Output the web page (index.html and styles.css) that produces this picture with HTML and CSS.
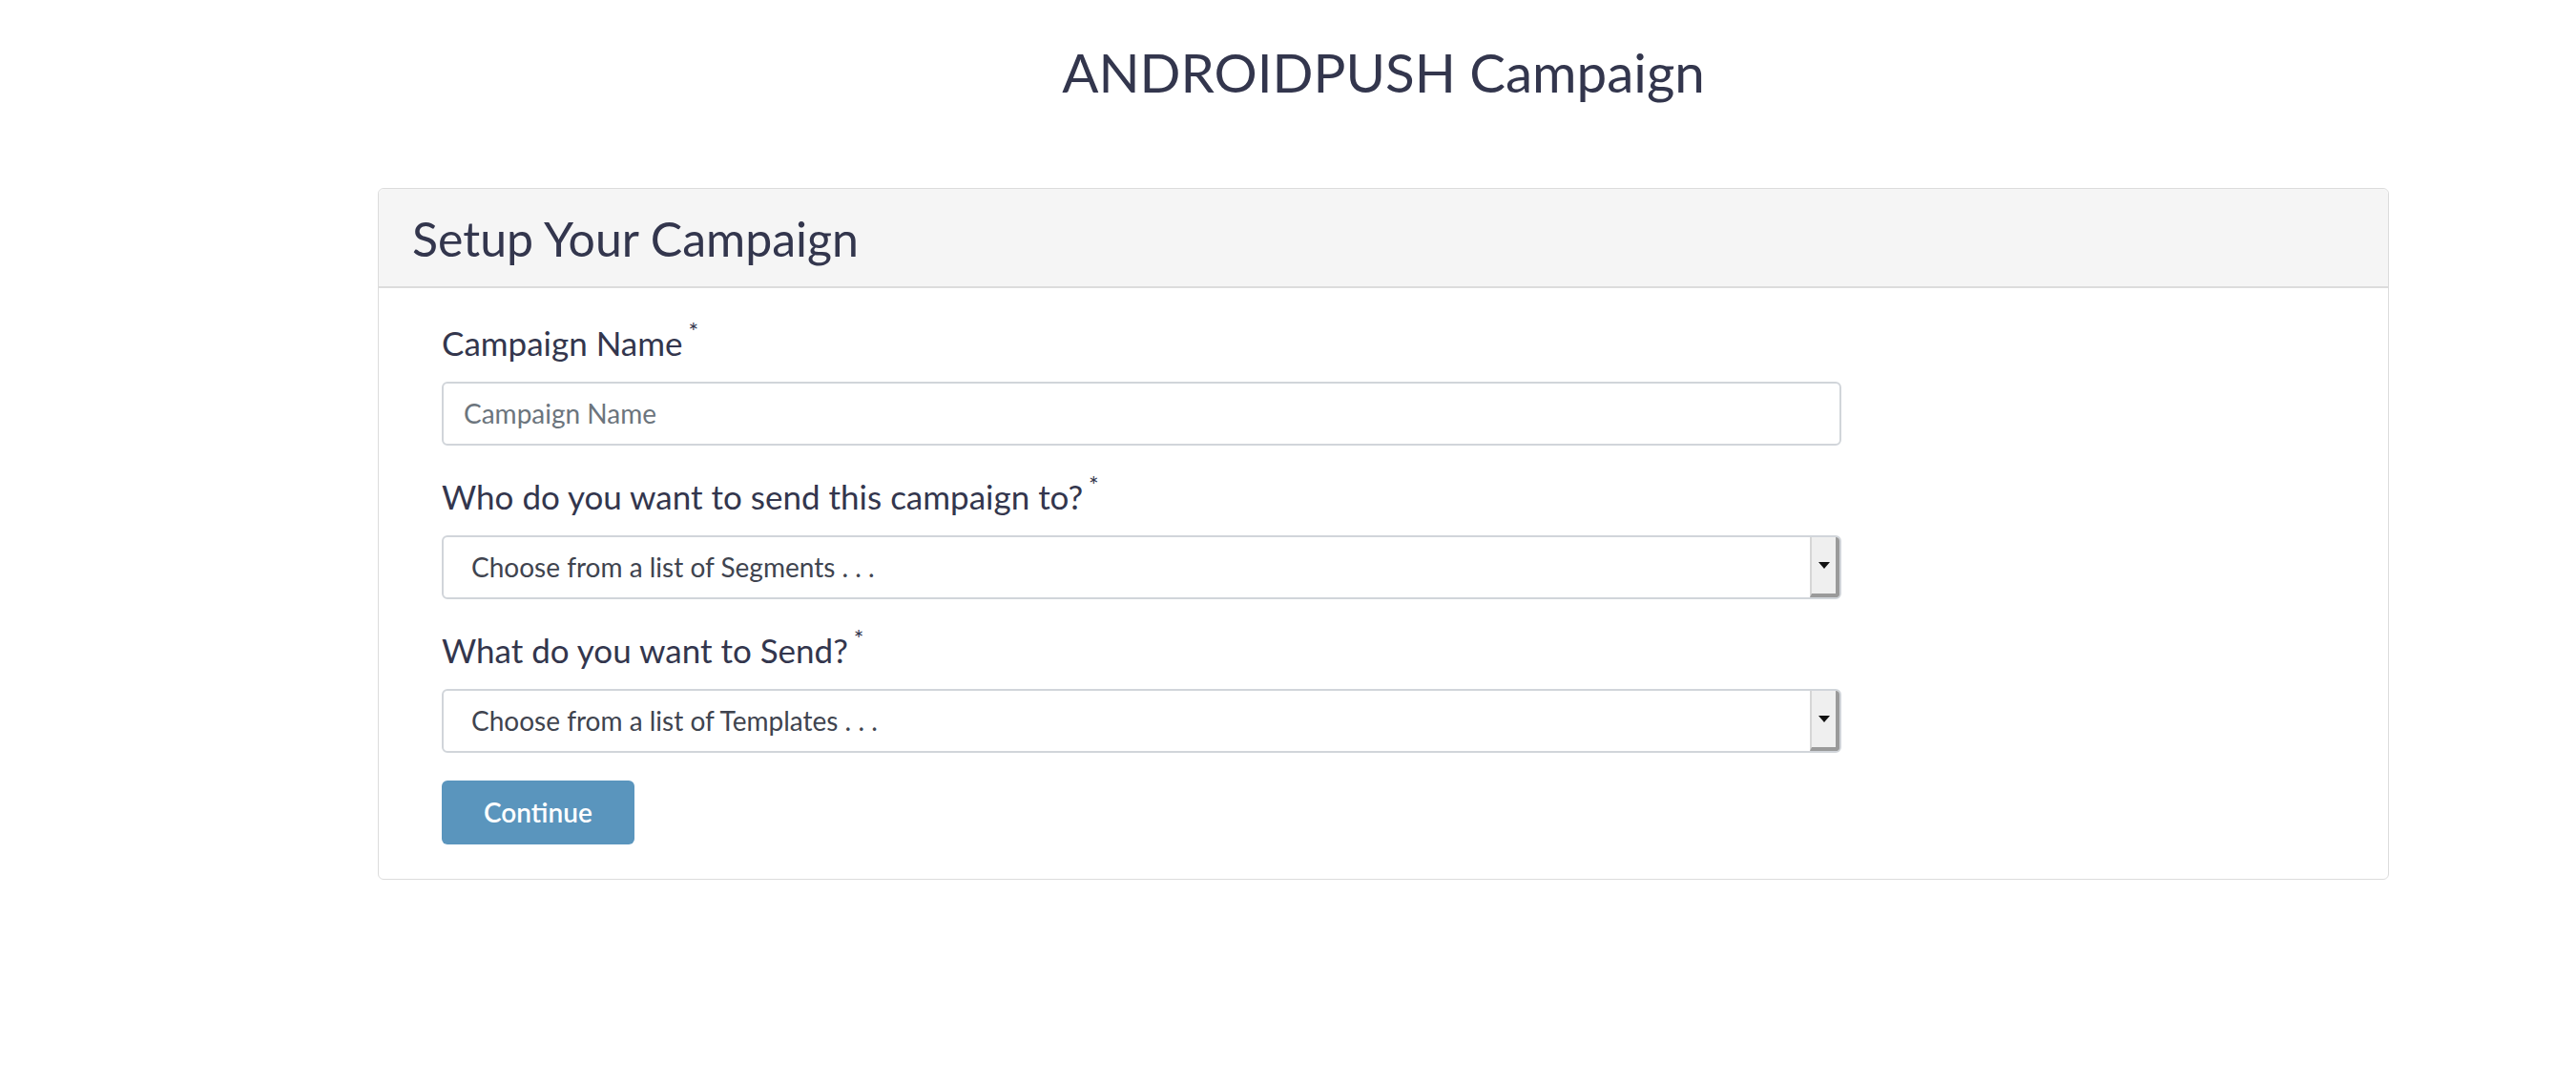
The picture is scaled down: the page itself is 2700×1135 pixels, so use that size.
FILE: index.html
```html
<!DOCTYPE html>
<html lang="en">
<head>
<meta charset="utf-8">
<title>ANDROIDPUSH Campaign</title>
<link rel="stylesheet" href="styles.css">
</head>
<body>
<main class="page">
  <h2 class="page-title">ANDROIDPUSH Campaign</h2>
  <section class="card">
    <div class="card-header">
      <h3 class="card-title">Setup Your Campaign</h3>
    </div>
    <div class="card-body">
      <form class="campaign-form">
        <div class="form-group">
          <label class="form-label">Campaign Name <sup class="req">*</sup></label>
          <input class="form-control" type="text" placeholder="Campaign Name">
        </div>
        <div class="form-group">
          <label class="form-label">Who do you want to send this campaign to? <sup class="req">*</sup></label>
          <div class="select-box">
            <span class="select-text">Choose from a list of Segments . . .</span>
            <span class="select-arrow"><span class="tri"></span></span>
          </div>
        </div>
        <div class="form-group">
          <label class="form-label">What do you want to Send? <sup class="req">*</sup></label>
          <div class="select-box">
            <span class="select-text">Choose from a list of Templates . . .</span>
            <span class="select-arrow"><span class="tri"></span></span>
          </div>
        </div>
        <button class="btn" type="button">Continue</button>
      </form>
    </div>
  </section>
</main>
</body>
</html>
```
FILE: styles.css
```css
* { box-sizing: border-box; }
html, body { margin: 0; padding: 0; background: #fff; }
body {
  font-family: Lato, "Open Sans", "Liberation Sans", sans-serif;
  color: #33364d;
}
.page {
  display: flex;
  flex-direction: column;
  padding: 0 196px 0 396px;
}
.page-title {
  margin: 42px 0 87px;
  font-size: 56.5px;
  line-height: 1.2;
  font-weight: 400;
  text-align: center;
  color: #33364d;
}
.card {
  border: 1px solid #dcdcdc;
  border-radius: 6px;
  background: #fff;
}
.card-header {
  background: #f5f5f5;
  border-bottom: 2px solid #dcdcdc;
  border-radius: 6px 6px 0 0;
  padding: 22px 35px 20px;
}
.card-title {
  margin: 0;
  font-size: 50px;
  line-height: 60px;
  font-weight: 400;
  color: #33364d;
}
.card-body {
  padding: 31px 35px 36px 66px;
}
.campaign-form {
  width: 1467px;
  display: flex;
  flex-direction: column;
}
.form-group {
  display: flex;
  flex-direction: column;
  margin-bottom: 27px;
}
.form-label {
  font-size: 35px;
  line-height: 52px;
  margin-bottom: 15px;
  color: #33364d;
}
.req {
  font-size: 25px;
  vertical-align: top;
  line-height: 1;
  position: relative;
  top: 2px;
  margin-left: -3px;
}
.form-control {
  height: 67px;
  border: 2px solid #d1d5da;
  border-radius: 6px;
  padding: 0 21px;
  font-family: inherit;
  font-size: 28px;
  color: #495057;
  outline: none;
}
.form-control::placeholder { color: #6c757d; }
.select-box {
  height: 67px;
  border: 2px solid #d1d5da;
  border-radius: 6px;
  display: flex;
  align-items: stretch;
  overflow: hidden;
}
.select-text {
  flex: 1;
  display: flex;
  align-items: center;
  padding-left: 29px;
  font-size: 28px;
  color: #40444f;
}
.select-arrow {
  width: 31px;
  background: #efefef;
  border-left: 2px solid #d6d6d6;
  border-right: 4px solid #9a9a9a;
  border-bottom: 4px solid #9a9a9a;
  display: flex;
  align-items: center;
  justify-content: center;
}
.tri {
  width: 0;
  height: 0;
  border-left: 6px solid transparent;
  border-right: 6px solid transparent;
  border-top: 7px solid #111;
}
.btn {
  align-self: flex-start;
  margin-top: 2px;
  height: 67px;
  padding: 0 44px;
  border: none;
  border-radius: 6px;
  background: #5a95bd;
  color: #fff;
  font-family: inherit;
  font-size: 28px;
  font-weight: 600;
}
```
